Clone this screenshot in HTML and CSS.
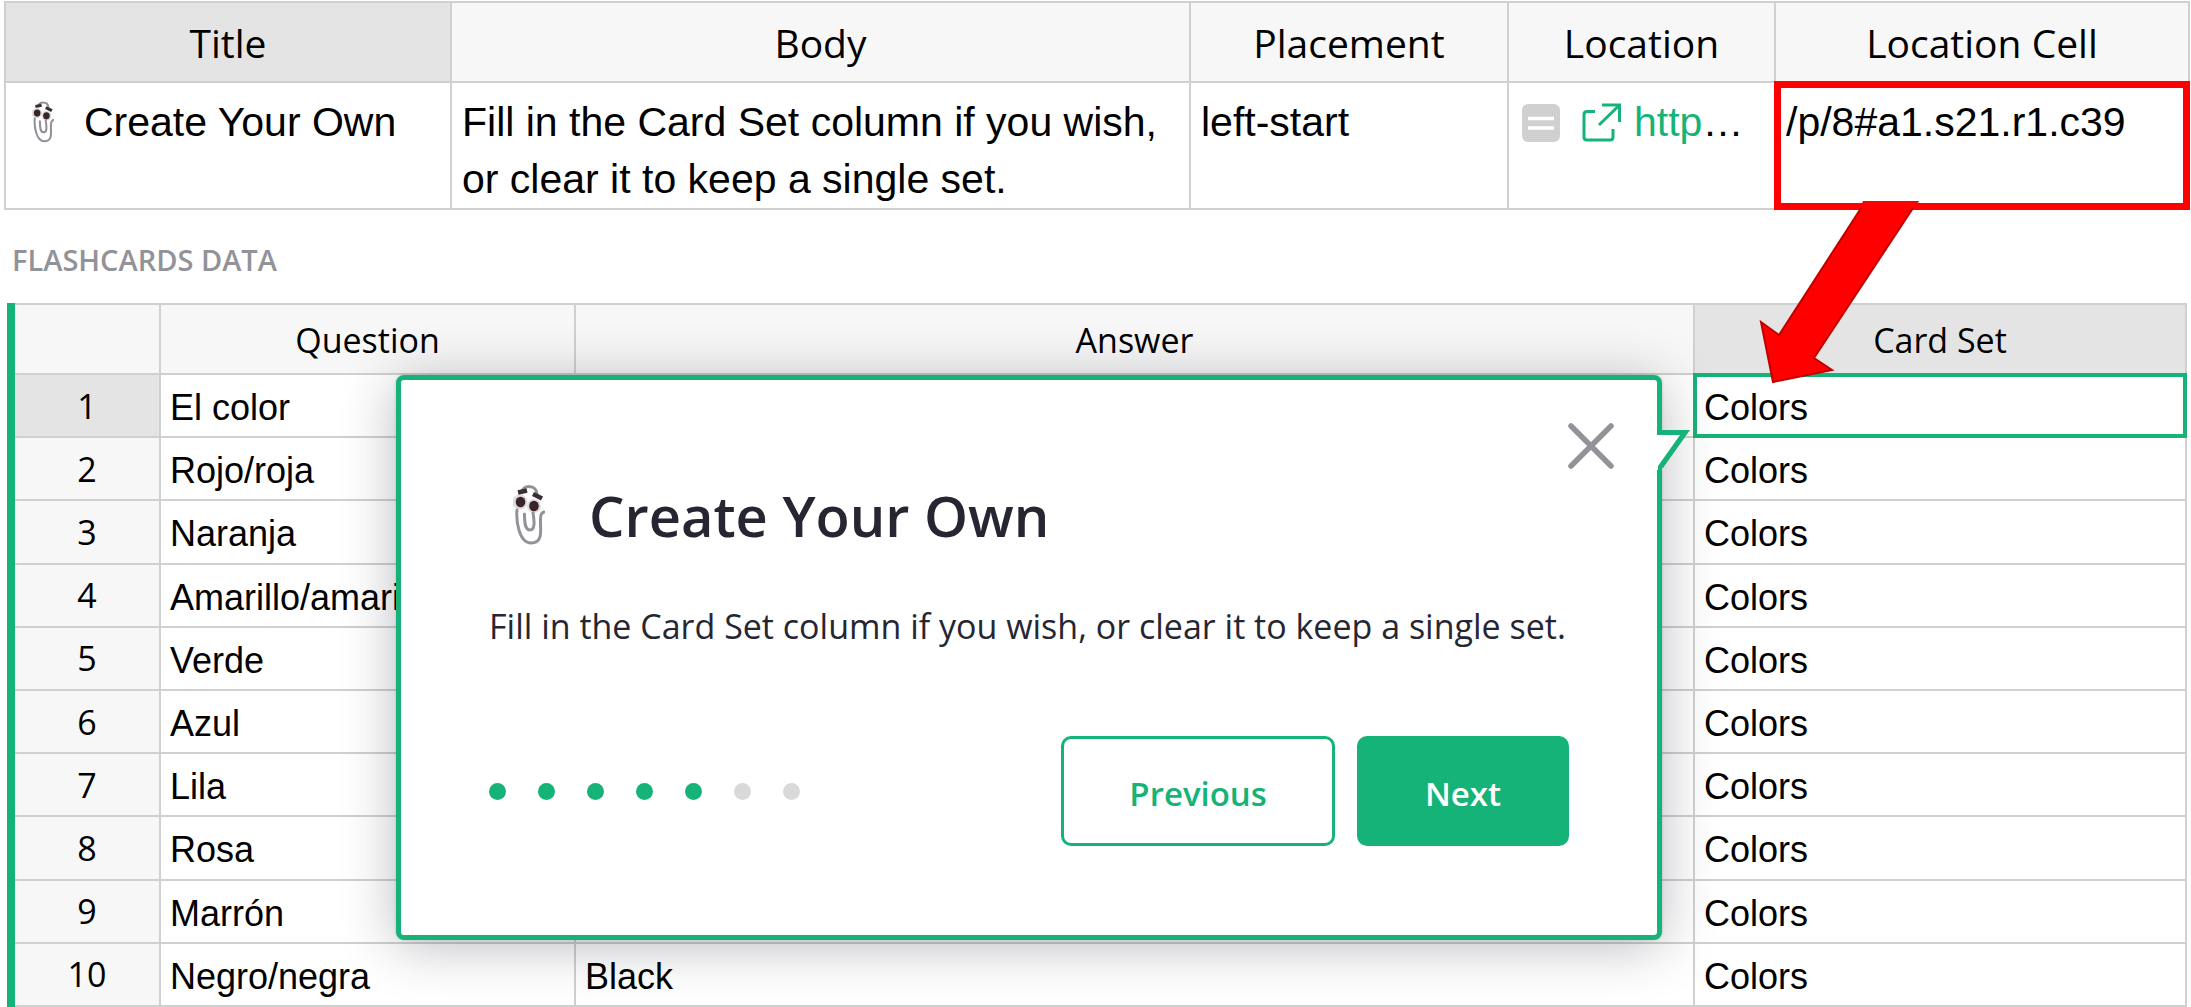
FILE: index.html
```
<!DOCTYPE html>
<html lang="en">
<head>
<meta charset="utf-8">
<title>Flashcards</title>
<link rel="stylesheet" href="styles.css">
</head>
<body>

<svg class="defs" aria-hidden="true">
  <symbol id="clip" viewBox="0 0 32 60">
    <circle cx="7" cy="17" r="7.500" fill="#dcdcdc"/>
    <circle cx="21" cy="21" r="7" fill="#dcdcdc"/>
    <g fill="none" stroke="#929299" stroke-width="3" stroke-linecap="round">
      <path d="M9 7 C10 3 13 1.500 16 1.500 C21 1.500 24 5 24 10"/>
      <path d="M4 25 C3 36 6 58 18 58 C31 58 27 44 27.500 35 C27.500 30 28 28 31 27"/>
      <path d="M11.500 29 C11.500 38 12 45 17 45 C22 45 21.500 37 20 28"/>
    </g>
    <ellipse cx="7.500" cy="17" rx="4.800" ry="5.200" fill="#3a2428"/>
    <ellipse cx="21" cy="21" rx="4.800" ry="5.200" fill="#3a2428"/>
    <path d="M5 7.500 L14 5.500 M20 9 L29 13.500" stroke="#3a2f36" stroke-width="4.500" fill="none"/>
  </symbol>
</svg>

<div class="page">

<table class="tour">
  <colgroup>
    <col class="c-title"><col><col class="c-place"><col class="c-loc"><col class="c-cell">
  </colgroup>
  <thead>
    <tr><th class="current">Title</th><th>Body</th><th>Placement</th><th>Location</th><th>Location Cell</th></tr>
  </thead>
  <tbody>
    <tr>
      <td><div class="named"><svg class="clip"><use href="#clip"/></svg>Create Your Own</div></td>
      <td>Fill in the Card Set column if you wish,<br>or clear it to keep a single set.</td>
      <td>left-start</td>
      <td>
        <div class="loc">
          <svg class="note" viewBox="0 0 38 38"><rect width="38" height="38" rx="6" fill="#d0d0d0"/><path d="M6 14.500 H32 M6 24 H32" stroke="#fff" stroke-width="3.500"/></svg>
          <svg class="ext" viewBox="0 0 40 40" fill="none" stroke="#16b378" stroke-width="3"><path d="M13 8.500 H5 Q2 8.500 2 11.500 V34 Q2 37 5 37 H28 Q31 37 31 34 V26 M20 2 H37.500 V19 M37.500 2 L17 22"/></svg>
          <span class="url"><a href="#a1.s21">http</a>…</span>
        </div>
      </td>
      <td class="marked">/p/8#a1.s21.r1.c39</td>
    </tr>
  </tbody>
</table>

<h2 class="section">FLASHCARDS DATA</h2>

<div class="grid">
<table class="cards">
  <colgroup>
    <col class="c-num"><col class="c-question"><col><col class="c-set">
  </colgroup>
  <thead>
    <tr><th></th><th>Question</th><th>Answer</th><th class="current">Card Set</th></tr>
  </thead>
  <tbody>
    <tr><th class="current">1</th><td>El color</td><td></td><td class="cursor">Colors</td></tr>
    <tr><th>2</th><td>Rojo/roja</td><td></td><td>Colors</td></tr>
    <tr><th>3</th><td>Naranja</td><td></td><td>Colors</td></tr>
    <tr><th>4</th><td>Amarillo/amarilla</td><td></td><td>Colors</td></tr>
    <tr><th>5</th><td>Verde</td><td></td><td>Colors</td></tr>
    <tr><th>6</th><td>Azul</td><td></td><td>Colors</td></tr>
    <tr><th>7</th><td>Lila</td><td></td><td>Colors</td></tr>
    <tr><th>8</th><td>Rosa</td><td></td><td>Colors</td></tr>
    <tr><th>9</th><td>Marrón</td><td></td><td>Colors</td></tr>
    <tr><th>10</th><td>Negro/negra</td><td>Black</td><td>Colors</td></tr>
  </tbody>
</table>

<!-- tour popup, sits left of the cursor cell -->
<div class="popup" role="dialog" aria-labelledby="popup-title">
  <svg class="tip" viewBox="0 0 34 40"><path d="M0 0 H33 L6 38 H0 Z" fill="#16b378"/><path d="M0 5 H23 L1 36 V40 H0 Z" fill="#fff"/></svg>
  <button class="close" type="button" aria-label="Close">
    <svg viewBox="0 0 48 48"><path d="M4 4 L44 44 M44 4 L4 44" stroke="#929299" stroke-width="5.500" stroke-linecap="round"/></svg>
  </button>
  <h1 class="popup-title" id="popup-title"><svg class="clip-big"><use href="#clip"/></svg>Create Your Own</h1>
  <p class="popup-text">Fill in the Card Set column if you wish, or clear it to keep a single set.</p>
  <div class="popup-foot">
    <div class="dots">
      <span class="dot done"></span><span class="dot done"></span><span class="dot done"></span><span class="dot done"></span><span class="dot done"></span><span class="dot"></span><span class="dot"></span>
    </div>
    <button class="btn" type="button">Previous</button>
    <button class="btn primary" type="button">Next</button>
  </div>
</div>
</div>

<!-- arrow from the location cell to the cell it points at -->
<svg class="arrow" viewBox="0 0 160 184"><path d="M106 2 H158 L55 158 L73 170 L14 182 L2 122 L20 135 Z" fill="#ff0000" stroke="#c00000" stroke-width="2"/><path d="M104 1 H160 L155 8 H101 Z" fill="#ff0000"/></svg>

</div>
</body>
</html>
```
FILE: styles.css
```
* { box-sizing: border-box; }
body {
  margin: 0;
  background: #fff;
  color: #000;
  font-family: "Liberation Sans", Arial, sans-serif;
}
.defs { display: none; }
.page { position: relative; padding: 1px 1px 0 4px; }

table { width: 100%; border-collapse: collapse; table-layout: fixed; }
th, td { border: 2px solid #d0d0d0; overflow: hidden; white-space: nowrap; }
th {
  background: #f7f7f7;
  font-family: "Open Sans", "Noto Sans", sans-serif;
  font-weight: 400;
  padding: 0;
}
th.current { background: #e4e4e4; }
td { text-align: left; }

/* tour definition table */
.tour { height: 208px; }
.tour th { height: 80px; font-size: 39px; line-height: 56px; padding-top: 2px; }
.tour td { vertical-align: top; font-size: 41px; line-height: 57px; padding: 11px 8px 0 10px; }
.c-title { width: 446px; }
.c-place { width: 318px; }
.c-loc { width: 267px; }
.c-cell { width: 414px; }
.named { display: flex; gap: 30px; padding-left: 16px; }
.clip { width: 22px; height: 42px; margin-top: 7px; }
.loc { display: flex; align-items: center; padding-left: 3px; }
.note { width: 38px; height: 38px; }
.ext { width: 40px; height: 40px; margin: 0 12px 0 22px; }
.url a { color: #16b378; text-decoration: none; }
.marked { outline: 7px solid #ff0000; outline-offset: -6px; }

.section {
  margin: 28px 0 0 8px;
  color: #929299;
  font-family: "Open Sans", "Noto Sans", sans-serif;
  font-size: 29px;
  font-weight: 600;
  line-height: 44px;
}

/* flashcards table */
.grid { position: relative; margin: 21px 3px 0 3px; border-left: 8px solid #16b378; }
.cards { height: 704px; }
.cards thead th { height: 70px; padding-top: 2px; }
.cards th { font-size: 34px; line-height: 48px; }
.cards td { font-size: 36px; line-height: 48px; padding: 5px 9px 0; }
.cards tr > :first-child { border-left: 0; }
.c-num { width: 145px; }
.c-question { width: 415px; }
.c-set { width: 492px; }
.cursor { outline: 4px solid #16b378; outline-offset: -3px; }

.popup {
  position: absolute;
  top: 72px;
  right: 525px;
  width: 1266px;
  border: 5px solid #16b378;
  border-radius: 8px;
  background: #fff;
  color: #262633;
  box-shadow: 0 6px 54px rgba(31, 37, 50, .31), 0 0 3px rgba(76, 86, 103, .24);
  font-family: "Open Sans", "Noto Sans", sans-serif;
  padding: 95px 88px 89px;
}
.tip { position: absolute; left: 100%; top: 50px; width: 34px; height: 40px; }
.close {
  position: absolute;
  top: 42px;
  right: 42px;
  width: 48px;
  height: 48px;
  padding: 0;
  border: 0;
  background: none;
}
.close svg { display: block; }
.popup-title {
  display: flex;
  align-items: center;
  gap: 44px;
  margin: 0;
  padding-left: 24px;
  font-size: 56px;
  font-weight: 600;
  line-height: 80px;
}
.clip-big { width: 32px; height: 60px; }
.popup-text { margin: 41px 0 0; font-size: 34px; line-height: 60px; white-space: nowrap; }
.popup-foot { display: flex; align-items: center; gap: 22px; margin-top: 80px; }
.dots { display: flex; gap: 32px; margin-right: auto; }
.dot { width: 17px; height: 17px; border-radius: 50%; background: #d9d9d9; }
.dot.done { background: #16b378; }
.btn {
  height: 110px;
  padding: 4px 65px 0;
  border: 3px solid #16b378;
  border-radius: 10px;
  background: #fff;
  color: #16b378;
  font: 600 33px "Open Sans", "Noto Sans", sans-serif;
}
.btn.primary { background: #16b378; color: #fff; }

.arrow { position: absolute; top: 200px; right: 272px; width: 160px; height: 184px; }
```
